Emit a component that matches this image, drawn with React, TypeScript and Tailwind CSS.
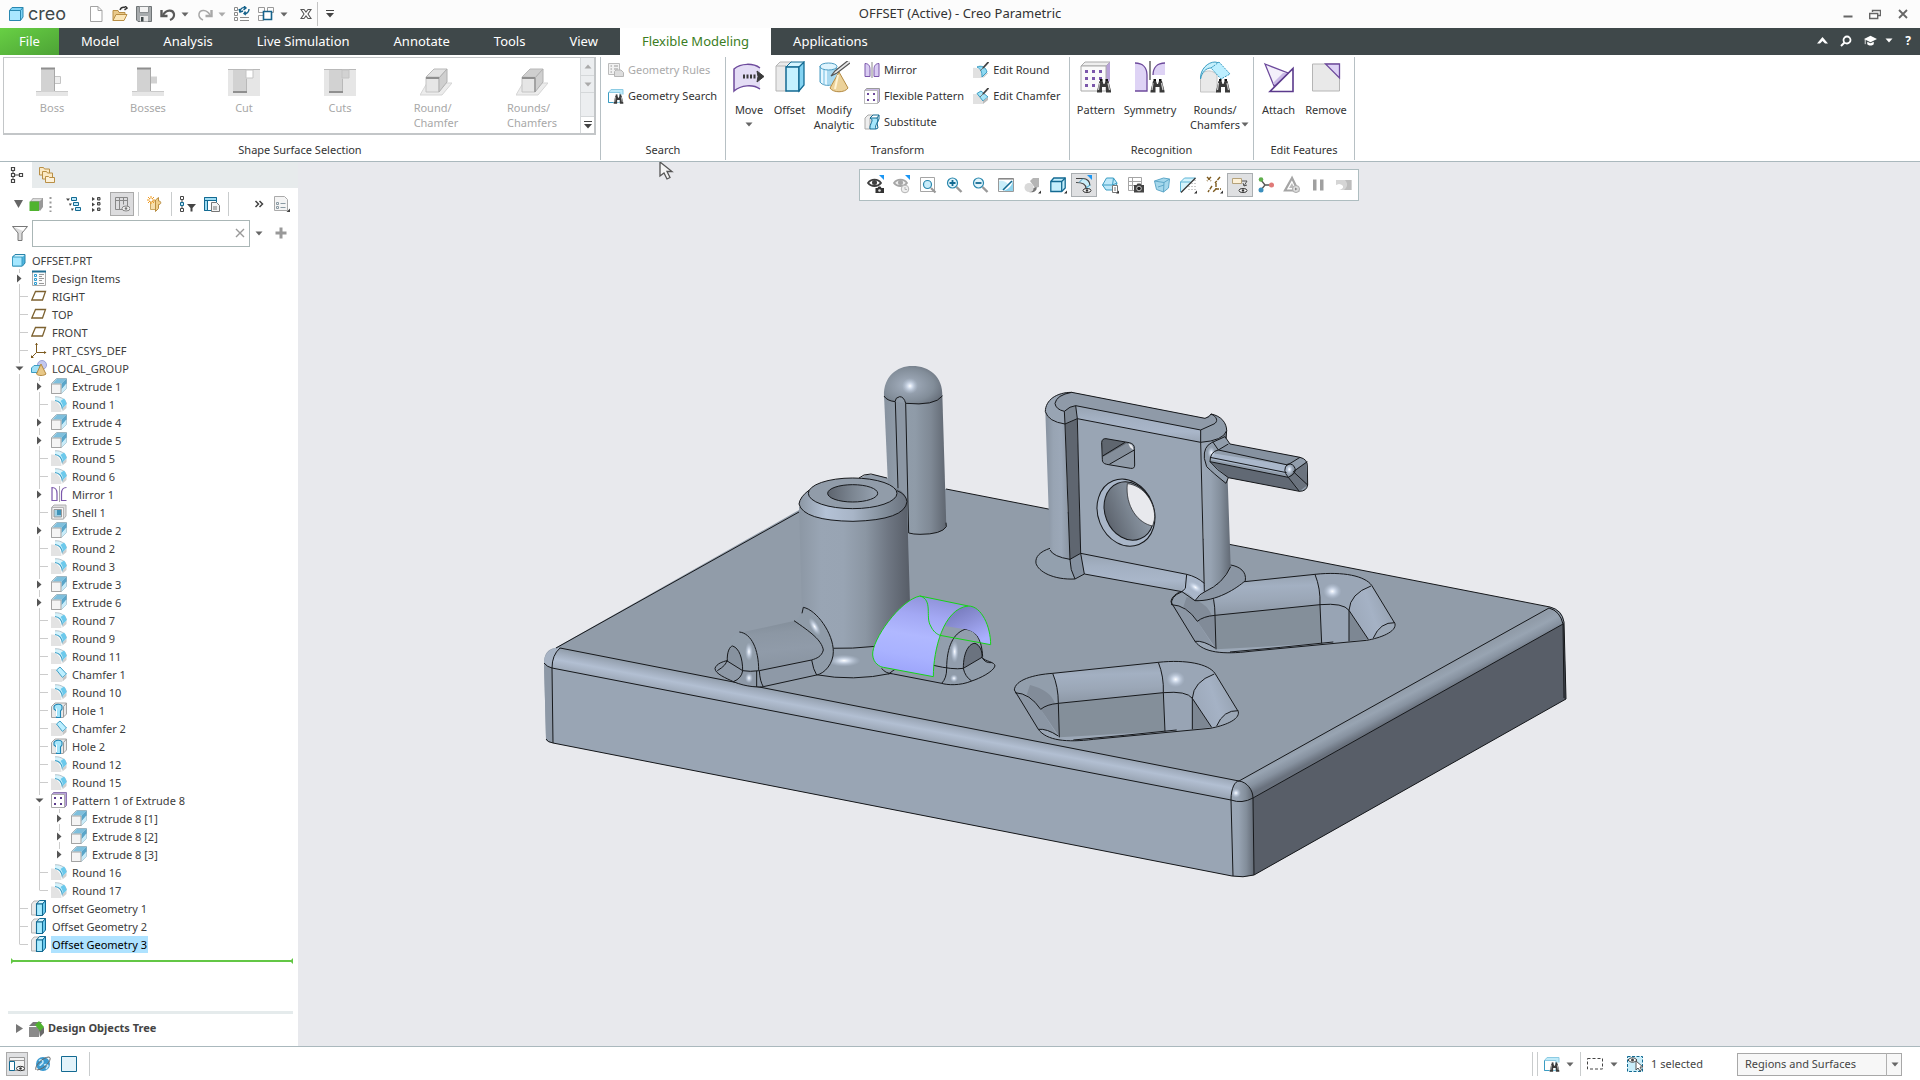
import { useState } from "react";
import type { ReactNode } from "react";

type IconProps = { size?: number; box?: string; children: ReactNode };

const Svg = ({ size = 16, box = "0 0 16 16", children }: IconProps) => (
  <svg width={size} height={size} viewBox={box} fill="none" className="shrink-0" aria-hidden="true">
    {children}
  </svg>
);

const Caret = ({ color = "#666" }: { color?: string }) => (
  <svg width="8" height="5" viewBox="0 0 8 5" className="shrink-0" aria-hidden="true">
    <path d="M0.5 0.5h7L4 4.5z" fill={color} />
  </svg>
);

const Binoculars = () => (
  <g>
    <path d="M1 14 3.500 4h3l1 3h1l1-3h3L15 14v1.500h-5V10H6v5.500H1z" fill="#3a3a3a" />
    <path d="M3.500 6 2.500 13M12 6l1.500 7" stroke="#c9c9c9" strokeWidth="1.200" />
    <path d="M4 3h2.500M9.500 3H12" stroke="#111" strokeWidth="2" />
  </g>
);

/* ---------- quick access ---------- */

const quick: Record<string, ReactNode> = {
  New: (
    <Svg>
      <path d="M2.500.5h7.500l4 4v11h-11.500z" fill="#fff" stroke="#a3a3a3" />
      <path d="M10 .5v4h4" stroke="#a3a3a3" />
    </Svg>
  ),
  Open: (
    <Svg>
      <path d="M1 14.500V4.500h5l1 2h6v3" fill="#e9c98a" stroke="#b98f45" />
      <path d="M1 14.500 4 8.500h11l-3 6z" fill="#fbe6b8" stroke="#b98f45" />
      <path d="M8 4c1-2.500 3-3 5-2.500M13 0l2 2-2.500 2" stroke="#333" strokeWidth="1.500" />
    </Svg>
  ),
  Save: (
    <Svg>
      <path d="M.5 .5h15v15H2l-1.500-1.500z" fill="#a7abad" stroke="#6f7476" />
      <path d="M3.500 .5h9v6h-9z" fill="#f3f3f3" stroke="#8b8f91" />
      <path d="M4 10h8v5.500H4z" fill="#e8e8e8" />
      <path d="M5 11h2.500v4.500H5z" fill="#3f484a" />
    </Svg>
  ),
  Undo: (
    <Svg>
      <path d="M1.500 4v6h6" stroke="#5a5a5a" strokeWidth="2.400" />
      <path d="M3 9C6 3.500 13 3 14 8c.4 3-1.500 5-4 6" stroke="#5a5a5a" strokeWidth="2.200" />
    </Svg>
  ),
  Redo: (
    <Svg>
      <path d="M14.500 4v6h-6" stroke="#a8a8a8" strokeWidth="2.400" />
      <path d="M13 9C10 3.500 3 3 2 8c-.4 3 1.500 5 4 6" stroke="#a8a8a8" strokeWidth="1.500" />
    </Svg>
  ),
  Regenerate: (
    <Svg>
      <path d="M.5 1.500h3v3h-3zM.5 6.500h3v3h-3zM.5 11.500h3v3h-3z" stroke="#8a8a8a" />
      <path d="M6 11.500h9M6 14.500h9" stroke="#8a8a8a" />
      <path d="M6 5c1-3 3-4 5-3M15 3c0 3-2 5-5 4.500M10 0l2 2-2.500 2M5 3l1 3 3-1M11.500 5.500 10 7.500l2 1.500" stroke="#16638c" strokeWidth="1.400" />
    </Svg>
  ),
  Windows: (
    <Svg>
      <path d="M.5 1.500h6v5h-6zM9.500 1.500h6v5h-6zM.5 9.500h5v5h-5z" stroke="#999" />
      <path d="M5.500 5.500h8v8h-8z" fill="#fff" stroke="#16638c" strokeWidth="1.600" />
    </Svg>
  ),
  Close: (
    <Svg size={12} box="0 0 12 12">
      <path d="M1 1.500h3l2 2.500 2-2.500h3L8 6l3 4.500H8L6 8l-2 2.500H1L4 6z" fill="#fff" stroke="#555" strokeWidth="1.100" />
    </Svg>
  ),
};

const QuickButton = ({ name }: { name: string }) => (
  <button aria-label={name} className="flex items-center">
    {quick[name]}
  </button>
);

const TitleBar = () => (
  <div className="grid h-7 grid-cols-[1fr_auto_1fr] items-center bg-[#fcfcfc] text-[13px] text-[#333]">
    <div className="flex h-full items-center pl-2">
      <Svg>
        <path d="M1.500 4.500 4 1.500h11v9.500l-2.500 3.500h-11z" fill="#7fd3f5" stroke="#2987b0" />
        <path d="M1.500 4.500h11v10M12.500 4.500l2.500-3" stroke="#2987b0" />
        <path d="M2 5h10v9H2z" fill="#a9e6ff" />
      </Svg>
      <span className="ml-1 w-10 font-['Inter'] text-[18px] leading-5 text-[#3f484a]">creo</span>
      <div className="flex items-center gap-2 pl-5">
        <QuickButton name="New" />
        <QuickButton name="Open" />
        <QuickButton name="Save" />
        <div className="flex items-center gap-[5px]">
          <QuickButton name="Undo" />
          <Caret />
        </div>
        <div className="flex items-center gap-[5px]">
          <QuickButton name="Redo" />
          <Caret color="#aaa" />
        </div>
        <QuickButton name="Regenerate" />
        <div className="flex items-center gap-[6px]">
          <QuickButton name="Windows" />
          <Caret />
        </div>
        <div className="ml-1">
          <QuickButton name="Close" />
        </div>
      </div>
      <div className="ml-[5px] h-6 w-px bg-[#c4c4c4]" />
      <button aria-label="Customize toolbar" className="ml-2">
        <svg width="8" height="8" viewBox="0 0 8 8">
          <path d="M0 .5h8" stroke="#444" />
          <path d="M0 3h8L4 7.500z" fill="#444" />
        </svg>
      </button>
    </div>
    <h1>OFFSET (Active) - Creo Parametric</h1>
    <div className="flex items-center justify-end gap-4 pr-[11px]">
      <button aria-label="Minimize" className="flex">
        <Svg size={12} box="0 0 12 12">
          <path d="M2.500 8.500h9" stroke="#666" strokeWidth="2" />
        </Svg>
      </button>
      <button aria-label="Restore" className="flex">
        <Svg size={12} box="0 0 12 12">
          <path d="M3.500 4V2.500h8v5H9" stroke="#666" strokeWidth="1.400" />
          <path d="M.7 5.500h8v5h-8z" stroke="#666" strokeWidth="1.400" />
        </Svg>
      </button>
      <button aria-label="Close window" className="flex">
        <Svg size={12} box="0 0 12 12">
          <path d="m2 2 8 8M10 2l-8 8" stroke="#666" strokeWidth="1.800" />
        </Svg>
      </button>
    </div>
  </div>
);

const tabs = ["Model", "Analysis", "Live Simulation", "Annotate", "Tools", "View", "Flexible Modeling", "Applications"];

const MenuBar = () => {
  const [active, setActive] = useState("Flexible Modeling");
  return (
    <nav className="flex h-[27px] bg-[#3f484a] text-[13px] text-white">
      <button className="w-[59px] bg-linear-to-br from-[#68d044] to-[#4da336] pt-px">File</button>
      {tabs.map((tab) => (
        <button
          key={tab}
          onClick={() => setActive(tab)}
          className={`px-[22px] pt-px ${tab === active ? "bg-white text-[#3b7d23]" : ""}`}
        >
          {tab}
        </button>
      ))}
      <div className="ml-auto flex items-center gap-3 pr-[9px] pb-[2px]">
        <button aria-label="Minimize ribbon">
          <svg width="11" height="7" viewBox="0 0 11 7">
            <path d="M0 6.500 5.500 0 11 6.500H8L5.500 4 3 6.500z" fill="#fff" />
          </svg>
        </button>
        <button aria-label="Search commands">
          <Svg size={12} box="0 0 12 12">
            <circle cx="7" cy="5" r="3.500" stroke="#fff" strokeWidth="1.800" />
            <path d="M4.500 7.500 1 11" stroke="#fff" strokeWidth="2" />
          </Svg>
        </button>
        <button aria-label="Learning" className="flex items-center gap-2">
          <Svg size={13}>
            <path d="M0 6 8 2l8 4-8 4zM4 9.500v3c2 2 6 2 8 0v-3l-4 2z" fill="#fff" />
            <path d="M1.500 6.500v6" stroke="#fff" />
          </Svg>
          <Caret color="#fff" />
        </button>
        <button aria-label="Help" className="text-[12px] font-bold">
          ?
        </button>
      </div>
    </nav>
  );
};

/* ---------- ribbon ---------- */

const bossIcon = (filled: boolean) => (
  <Svg size={32} box="0 0 32 32">
    <path d="M0 26h32v5H0z" fill="#e6e6e6" />
    <path d="M0 26.500h6M18 26.500h14" stroke="#c9c9c9" />
    <path d="M5 3h14v24H5z" fill="#d2d2d2" />
    <path d="M5 3.500h14" stroke="#8f8f8f" strokeWidth="2" />
    {filled ? (
      <path d="M18 11.500h7v7h-7z" fill="#d2d2d2" />
    ) : (
      <path d="M18.500 11.500h6v7h-6z" fill="#eee" stroke="#c4c4c4" />
    )}
    <path d="M18.500 4v22" stroke="#a8a8a8" />
  </Svg>
);

const cutIcon = (filled: boolean) => (
  <Svg size={32} box="0 0 32 32">
    <path d="M0 4h32v27H0z" fill="#e6e6e6" />
    <path d="M0 4.500h32" stroke="#b9b9b9" />
    <path d="M5 5h14v22H5z" fill="#d2d2d2" />
    <path d="M18 5h7v8h-7z" fill={filled ? "#d2d2d2" : "#fff"} stroke="#c4c4c4" />
    <path d="M18.500 14v12" stroke="#b9b9b9" />
    <path d="M5 27h14" stroke="#8f8f8f" strokeWidth="2" />
  </Svg>
);

const roundIcon = (filled: boolean) => (
  <Svg size={32} box="0 0 32 32">
    <path d="M0 30 7 18h25L22 30z" fill="#ececec" stroke="#d5d5d5" />
    <path d="M6 12 14 4h13l-8 9z" fill={filled ? "#cfcfcf" : "#e2e2e2"} stroke="#b9b9b9" />
    <path d="M6 12h13v15H6z" fill="#e6e6e6" stroke="#c4c4c4" />
    <path d="M19 13 27 4v13l-8 10z" fill="#cfcfcf" stroke="#b0b0b0" />
    <path d="M6 13h13" stroke="#8f8f8f" strokeWidth="2" />
    {filled && <path d="M19 13v14" stroke="#8f8f8f" strokeWidth="1.200" />}
  </Svg>
);

const gallery = [
  { label: "Boss", icon: bossIcon(false) },
  { label: "Bosses", icon: bossIcon(true) },
  { label: "Cut", icon: cutIcon(false) },
  { label: "Cuts", icon: cutIcon(true) },
  { label: "Round/\nChamfer", icon: roundIcon(false) },
  { label: "Rounds/\nChamfers", icon: roundIcon(true) },
];

const icons = {
  rules: (
    <Svg>
      <path d="M.5 1.500h11v11H.5z" fill="#f1f1f1" stroke="#bbb" />
      <path d="M2.500 4h1.500M6 4h4M2.500 7h1.500M6 7h4M2.500 10h1.500" stroke="#999" />
      <path d="M6.500 9.500 8 8h5l2.500 2.500v4h-9z" fill="#ddd" stroke="#b5b5b5" />
    </Svg>
  ),
  search: (
    <Svg>
      <path d="M.5 4.500 3 1.500h12v5" fill="#bfeaf8" stroke="#8ccbe3" />
      <path d="M.5 4.500H12v10H.5z" fill="#fff" stroke="#8ccbe3" />
      <path d="M.5 4.500v10H5" stroke="#3b9cc2" />
      <svg x="5" y="5" width="11" height="11" viewBox="0 0 16 16">
        <Binoculars />
      </svg>
    </Svg>
  ),
  move: (
    <Svg size={32} box="0 0 32 32">
      <path d="M1 8C8 2 20 2 27 7v22C20 23 8 24 1 30z" fill="#e4ddf5" />
      <path d="M27 7C20 2 8 2 1 8v22c7-6 19-7 26-2" stroke="#6d4a9c" strokeWidth="1.500" />
      <path d="M10 15.500h13" stroke="#3a3a3a" strokeWidth="4" strokeDasharray="2 1.500" />
      <path d="m24 10 7 5.500-7 5.500 1-5.500z" fill="#3a3a3a" stroke="#3a3a3a" />
    </Svg>
  ),
  offset: (
    <Svg size={32} box="0 0 32 32">
      <path d="M2 5 6 1h12l-5 5v24H2z" fill="#eaeaea" stroke="#b5b5b5" />
      <path d="M2 5h10" stroke="#b5b5b5" />
      <path d="M12 6 17 1h13l-5 5z" fill="#d5f5ff" stroke="#136a92" />
      <path d="M12 6h13v24H12z" fill="#c5f1ff" stroke="#136a92" strokeWidth="1.500" />
      <path d="M25 6 30 1v23l-5 6z" fill="#84d3f2" stroke="#136a92" strokeWidth="1.300" />
    </Svg>
  ),
  analytic: (
    <Svg size={32} box="0 0 32 32">
      <path d="M2 5v16c3 4 14 4 17 0V5z" fill="#a9d9f0" />
      <path d="M4 6v17M8 8v16" stroke="#e6f7ff" strokeWidth="2" />
      <ellipse cx="10.500" cy="5.500" rx="8.500" ry="3.500" fill="#dff4fd" stroke="#4c9cc2" />
      <path d="M2 5v16c2 3 7 4 11 3M19 7v4" stroke="#4c9cc2" />
      <path d="M21 11 12 27c3 5 15 5 18 0z" fill="#ecd29a" stroke="#b48a42" />
      <path d="m20 14-3 14" stroke="#fff3d3" strokeWidth="2" />
      <path d="M32-2 17 10l-4 5 6-3L32 2" fill="#e8e8e8" stroke="#555" strokeWidth="1.200" />
    </Svg>
  ),
  mirror: (
    <Svg>
      <path d="M1 1.500c4 0 5 3 5 6v7H1zM15 1.500c-4 0-5 3-5 6v7h5z" fill="#d9ccf2" stroke="#7b57ab" />
      <path d="M8 0v16" stroke="#888" />
    </Svg>
  ),
  pattern: (
    <Svg>
      <path d="M.5 3 2.500.5H15.500v13L13.500 15.500H.5z" fill="#c9b9e6" stroke="#9a9a9a" />
      <path d="M.5 2.500h13v13H.5z" fill="#fff" stroke="#bbb" />
      <path d="M3 5h2v2H3zM9 5h2v2H9zM3 11h2v2H3zM9 11h2v2H9z" fill="#6d4a9c" />
    </Svg>
  ),
  substitute: (
    <Svg>
      <path d="M1 4 4 1h5L6 4v11H1z" fill="#eee" stroke="#aaa" />
      <path d="M6 4c5 2-1 6 0 11h6c-2-5 4-6 1-11z" fill="#a6e6fb" stroke="#136a92" />
      <path d="m6 4 3-3h6l-2 3M15 1v4l-2 4 1 5-2 1" stroke="#136a92" />
    </Svg>
  ),
  editRound: (
    <Svg>
      <path d="M0 6c6-1 9 3 9 10H0z" fill="#e1e1e1" />
      <path d="M4 5c4-2 9 0 10 5l-5 5c0-5-1-8-5-10z" fill="#8fdaf3" stroke="#3b9cc2" />
      <path d="M10 15.500 14.500 11" stroke="#aaa" />
      <path d="M15.500 0 10 6" stroke="#444" strokeWidth="1.800" />
      <path d="m10 6-3 3" stroke="#777" />
    </Svg>
  ),
  editChamfer: (
    <Svg>
      <path d="M0 6h4l6 6v4H0z" fill="#e1e1e1" />
      <path d="m4 5.500 4-2.500 7 6-5 4z" fill="#a5e5f8" stroke="#3b9cc2" />
      <path d="M10 13v3l5-4V9z" fill="#bbb" />
      <path d="M15.500 0 10 6" stroke="#444" strokeWidth="1.800" />
      <path d="m10 6-3 3" stroke="#777" />
    </Svg>
  ),
  patternBig: (
    <Svg size={32} box="0 0 32 32">
      <path d="M1 5 5 1h25l-4 4z" fill="#eee" stroke="#aaa" />
      <path d="m26 5 4-4v18l-4 11z" fill="#b8a3d8" />
      <path d="M1 5h25v25H1z" fill="#fafafa" stroke="#aaa" />
      <path d="M5 9h3v3H5zM12 9h3v3h-3zM19 9h3v3h-3zM5 16h3v3H5zM12 16h3v3h-3zM19 16h3v3h-3zM5 23h3v3H5zM12 23h3v3h-3z" fill="#7b57ab" />
      <svg x="16" y="16" width="16" height="16" viewBox="0 0 16 16">
        <Binoculars />
      </svg>
    </Svg>
  ),
  symmetry: (
    <Svg size={32} box="0 0 32 32">
      <path d="M1 2c8 0 12 5 12 12v16H1zM31 2c-8 0-12 5-12 12h12z" fill="#ded3f5" />
      <path d="M1 2c8 0 12 5 12 12v16H1M31 2c-8 0-12 5-12 12" stroke="#6d4a9c" strokeWidth="1.300" />
      <path d="M16 0v19" stroke="#8a8a8a" strokeWidth="2" />
      <svg x="15" y="16" width="17" height="16" viewBox="0 0 16 16">
        <Binoculars />
      </svg>
    </Svg>
  ),
  rounds: (
    <Svg size={32} box="0 0 32 32">
      <path d="M1.500 31V18C1 11 11 6 18 14v17z" fill="#e9e9e9" stroke="#c4c4c4" />
      <path d="M1.500 18C1 8 9 1 16 1l5 1-9 5C7 7 3 11 1.500 18z" fill="#c5f0fc" stroke="#3b9cc2" />
      <path d="M12 7 20 1l11 12-9 5z" fill="#bdefff" stroke="#3b9cc2" strokeDasharray="2 1" />
      <svg x="16" y="16" width="16" height="16" viewBox="0 0 16 16">
        <Binoculars />
      </svg>
    </Svg>
  ),
  attach: (
    <Svg size={32} box="0 0 32 32">
      <path d="m2 3 23 9-14 13z" fill="#f3effa" stroke="#6d4a9c" strokeWidth="1.300" />
      <path d="m20 12 6 0-14 12-2-2z" fill="#c9b9e6" />
      <path d="M7 30.500h23v-23z" stroke="#5b3a8c" strokeWidth="1.600" />
    </Svg>
  ),
  remove: (
    <Svg size={32} box="0 0 32 32">
      <path d="M2.500 3h27v27h-27z" fill="#e9e9e9" stroke="#b5b5b5" />
      <path d="M15.500 3h14v14z" fill="#ddd2f5" stroke="#6d4a9c" strokeWidth="1.300" />
    </Svg>
  ),
};

const Group = ({ title, width, children }: { title: string; width: string; children: ReactNode }) => (
  <section className={`${width} shrink-0 flex flex-col`}>
    <div className="mt-[2px] flex h-[103px] flex-col border-r border-[#b7c0c4]">
      <div className="flex h-[83px]">{children}</div>
      <h2 className="text-center leading-[20px]">{title}</h2>
    </div>
  </section>
);

const Small = ({ icon, label, disabled }: { icon: ReactNode; label: string; disabled?: boolean }) => (
  <button disabled={disabled} className="flex h-[26px] items-center gap-1 whitespace-nowrap disabled:text-[#aaa]">
    {icon}
    {label}
  </button>
);

const Big = ({ icon, label, width, caret }: { icon: ReactNode; label: string; width: string; caret?: "below" | "side" }) => (
  <button className={`${width} flex flex-col items-center pt-1 leading-[15px]`}>
    {icon}
    <span className={`mt-[9px] whitespace-pre ${caret === "side" ? "relative" : ""}`}>
      {label}
      {caret === "side" && (
        <span className="absolute -right-[9px] bottom-[5px]">
          <Caret />
        </span>
      )}
    </span>
    {caret === "below" && (
      <span className="mt-[5px]">
        <Caret />
      </span>
    )}
  </button>
);

const Ribbon = () => (
  <div className="flex h-[107px] overflow-hidden border-b border-[#aab8bd] bg-white text-[11px] text-[#333]">
    <Group title="Shape Surface Selection" width="w-[601px]">
      <div className="ml-[3px] flex h-[78px] w-[593px] border-2 border-t-1 border-l-1 border-[#c3c6c8]">
        {gallery.map((g) => (
          <button key={g.label} disabled className="flex w-24 flex-col items-center pt-[7px] leading-[15px] text-[#a8a8a8]">
            {g.icon}
            <span className="mt-[3px] text-left whitespace-pre">{g.label}</span>
          </button>
        ))}
        <div className="flex flex-1 flex-col border-l border-[#d5d8da]">
          <button aria-label="Scroll up" className="flex h-[17px] items-center justify-center bg-[#eceef0]">
            <svg width="8" height="5" viewBox="0 0 8 5">
              <path d="M.5 4.500h7L4 .5z" fill="#aaa" />
            </svg>
          </button>
          <button aria-label="Scroll down" className="flex h-[18px] items-center justify-center border-y border-[#d5d8da] bg-[#eceef0]">
            <Caret color="#aaa" />
          </button>
          <div className="flex-1 bg-[#eceef0]" />
          <button aria-label="More shapes" className="flex h-[17px] items-center justify-center border-t border-[#d5d8da]">
            <svg width="8" height="8" viewBox="0 0 8 8">
              <path d="M0 .5h8" stroke="#444" />
              <path d="M0 3h8L4 7.500z" fill="#444" />
            </svg>
          </button>
        </div>
      </div>
    </Group>
    <Group title="Search" width="w-[125px]">
      <div className="flex flex-col pl-[7px]">
        <Small icon={icons.rules} label="Geometry Rules" disabled />
        <Small icon={icons.search} label="Geometry Search" />
      </div>
    </Group>
    <Group title="Transform" width="w-[344px]">
      <Big icon={icons.move} label="Move" width="w-[46px]" caret="below" />
      <Big icon={icons.offset} label="Offset" width="w-[35px]" />
      <Big icon={icons.analytic} label={"Modify\nAnalytic"} width="w-[54px]" />
      <div className="flex flex-col pl-[3px]">
        <Small icon={icons.mirror} label="Mirror" />
        <Small icon={icons.pattern} label="Flexible Pattern" />
        <Small icon={icons.substitute} label="Substitute" />
      </div>
      <div className="flex flex-col pl-[9px]">
        <Small icon={icons.editRound} label="Edit Round" />
        <Small icon={icons.editChamfer} label="Edit Chamfer" />
      </div>
    </Group>
    <Group title="Recognition" width="w-[184px]">
      <Big icon={icons.patternBig} label="Pattern" width="w-[52px]" />
      <Big icon={icons.symmetry} label="Symmetry" width="w-[56px]" />
      <Big icon={icons.rounds} label={"Rounds/\nChamfers"} width="w-[74px]" caret="side" />
    </Group>
    <Group title="Edit Features" width="w-[101px]">
      <Big icon={icons.attach} label="Attach" width="w-[49px]" />
      <Big icon={icons.remove} label="Remove" width="w-[46px]" />
    </Group>
  </div>
);

/* ---------- model tree ---------- */

const treeIcons: Record<string, ReactNode> = {
  part: (
    <Svg>
      <path d="M1.500 5 4 2.500h10v8.500L11.500 14h-10z" fill="#4cb5e0" stroke="#2b83a8" />
      <path d="M1.500 5h9.500v9h-9.500z" fill="#a5e7ff" stroke="#3b9cc2" />
      <path d="m3 4.500 1.500-1.500h9L12 4.500z" fill="#d5f5ff" />
    </Svg>
  ),
  items: (
    <Svg>
      <path d="M1.500 1.500h13v14h-13z" fill="#fbfbfb" stroke="#aaa" />
      <path d="M1 1.500h14" stroke="#1f6f94" strokeWidth="2" />
      <path d="M3.500 4.500h2v2h-2zM3.500 8.500h2v2h-2zM3.500 12.500h2v2h-2z" stroke="#2a9bd0" />
      <path d="M8 4.500h5M8 6.500h3M8 8.500h5M8 10.500h3M8 13.500h5" stroke="#999" />
    </Svg>
  ),
  plane: (
    <Svg>
      <path d="M4.500 3.500h10l-3 8.500H.8z" stroke="#7d6230" strokeWidth="1.300" />
    </Svg>
  ),
  csys: (
    <Svg>
      <path d="M5.500 1v9.500H15M5.500 10.500 1 15" stroke="#7d5a1e" />
      <path d="M4 3 5.500 1 7 3zM13 9l2.500 1.500L13 12zM0 13v3h3z" fill="#7d5a1e" />
    </Svg>
  ),
  group: (
    <Svg>
      <circle cx="11" cy="5" r="4.500" fill="#c3c8ee" stroke="#9aa2d8" />
      <path d="M.5 8 3 5.500h6v7H.5z" fill="#9fe0f7" stroke="#3b9cc2" />
      <path d="m10 4-4.500 10c2 2 7 2 9.500 0z" fill="#e8c888" stroke="#b48a42" />
    </Svg>
  ),
  extrude: (
    <Svg>
      <path d="M.5 5.500 5.500.5h10v10l-5 5H.5z" fill="#dff4fc" stroke="#a5b3ba" />
      <path d="M6 .8h9.500L10.500 5.500H1.500z" fill="#7fbfdc" />
      <path d="M10.500 5.500 15.500.8v4.700l-5 6z" fill="#5aa6ca" />
      <path d="m10.500 11.500 5-6v5l-5 5z" fill="#c9ecf9" />
      <path d="M.5 6h9.500v9.500H.5z" fill="#f4f4f4" stroke="#a3a3a3" />
    </Svg>
  ),
  round: (
    <Svg>
      <path d="M0 4.500c6-1 10 4.500 10.500 11.500H0z" fill="#e3e3e3" />
      <path d="M4 .8c6-.5 11 3 11.700 8.200L11.500 13c-.5-4-3-7-7.500-8z" fill="#d5f3fc" />
      <path d="M4 .8c6-.5 11 3 11.500 7.200" stroke="#b5c3ca" />
      <path d="M4 4.500c4 .5 7 4 7.500 9" stroke="#3f9fc6" strokeWidth="1.200" />
      <path d="m9.500 5 3.500-2.500c1.500 1.500 2.500 3.500 2.500 6L12 12c0-3-1-5-2.500-7z" fill="#6bc9ec" />
      <path d="M11.500 12.500V15.500L15.500 12V8.500z" fill="#cfcfcf" />
    </Svg>
  ),
  mirror: (
    <Svg>
      <path d="M1 1.500c4 0 5 3 5 6v7H1zM15.500 1.500c-4 0-5 3-5 6v7h5" stroke="#7b57ab" strokeWidth="1.200" />
      <path d="M8.500 0v16" stroke="#aaa" />
    </Svg>
  ),
  shell: (
    <Svg>
      <path d="M.5 3.500 3 1h12v11l-2.500 3H.5z" fill="#dedede" stroke="#b0b0b0" />
      <path d="M1 3.500h11.500V15H1z" fill="#f6f6f6" stroke="#b5b5b5" />
      <path d="M3 5.500h7.500v7.500H3z" fill="#9fd0e5" stroke="#999" />
      <path d="M6 6h4v5H6z" fill="#3f93b8" />
    </Svg>
  ),
  chamfer: (
    <Svg>
      <path d="M0 3h5l6 7v6H0z" fill="#e3e3e3" />
      <path d="m5.500 4 3.500-3 6.500 7-4 3.500z" fill="#bdefff" stroke="#3f9fc6" />
      <path d="m11.500 12 4-3.500V12l-4 3.500z" fill="#c4c4c4" />
    </Svg>
  ),
  hole: (
    <Svg>
      <path d="M.5 4.500 4 1h11.500v11L12 15.500H.5z" fill="#e9e9e9" stroke="#a5a5a5" />
      <path d="M3 4.500C4 1.500 10 1.500 11 4v3L9.500 9v6.500H5.500V9L3 7z" fill="#a6e6fb" stroke="#1f86b5" strokeWidth="1.100" />
      <path d="M5.500 6.500v8" stroke="#fff" />
      <path d="M12.500 4.500v11M12.500 4.500 15.500 1" stroke="#9a9a9a" />
    </Svg>
  ),
  pattern: (
    <Svg>
      <path d="M.5 3 2.500.5H15.500v13L13.500 15.500z" fill="#b8a3d8" stroke="#8d76b0" />
      <path d="M.5 2.500h13v13H.5z" fill="#fff" stroke="#aaa" />
      <path d="M3 5h2v2H3zM9 5h2v2H9zM3 11h2v2H3zM9 11h2v2H9z" fill="#5b3a8c" />
    </Svg>
  ),
  offset: (
    <Svg>
      <path d="M.5 4 3 1h5L5.500 4v11H.5z" fill="#eaeaea" stroke="#b5b5b5" />
      <path d="m5.500 4 3-3.500h6l-3 3.500z" fill="#d5f5ff" stroke="#136a92" />
      <path d="M5.500 4h6v11.500h-6z" fill="#a9ebff" stroke="#136a92" strokeWidth="1.100" />
      <path d="m11.500 4 3-3.500V12l-3 3.500z" fill="#6bcaee" stroke="#136a92" />
    </Svg>
  ),
};

type Row = { label: string; icon: string; depth: number; open?: boolean; closed?: boolean; last?: boolean; selected?: boolean };

const feature = (label: string, closed = false, depth = 2): Row => ({
  label,
  icon: label.split(" ")[0].toLowerCase(),
  depth,
  closed,
});

const rows: Row[] = [
  { label: "OFFSET.PRT", icon: "part", depth: 0 },
  { label: "Design Items", icon: "items", depth: 1, closed: true },
  { label: "RIGHT", icon: "plane", depth: 1 },
  { label: "TOP", icon: "plane", depth: 1 },
  { label: "FRONT", icon: "plane", depth: 1 },
  { label: "PRT_CSYS_DEF", icon: "csys", depth: 1 },
  { label: "LOCAL_GROUP", icon: "group", depth: 1, open: true },
  feature("Extrude 1", true),
  feature("Round 1"),
  feature("Extrude 4", true),
  feature("Extrude 5", true),
  feature("Round 5"),
  feature("Round 6"),
  feature("Mirror 1", true),
  feature("Shell 1"),
  feature("Extrude 2", true),
  feature("Round 2"),
  feature("Round 3"),
  feature("Extrude 3", true),
  feature("Extrude 6", true),
  feature("Round 7"),
  feature("Round 9"),
  feature("Round 11"),
  feature("Chamfer 1"),
  feature("Round 10"),
  feature("Hole 1"),
  feature("Chamfer 2"),
  feature("Hole 2"),
  feature("Round 12"),
  feature("Round 15"),
  { label: "Pattern 1 of Extrude 8", icon: "pattern", depth: 2, open: true },
  feature("Extrude 8 [1]", true, 3),
  feature("Extrude 8 [2]", true, 3),
  { ...feature("Extrude 8 [3]", true, 3), last: true },
  feature("Round 16"),
  { ...feature("Round 17"), last: true },
  { label: "Offset Geometry 1", icon: "offset", depth: 1 },
  { label: "Offset Geometry 2", icon: "offset", depth: 1 },
  { label: "Offset Geometry 3", icon: "offset", depth: 1, last: true, selected: true },
];

const Guide = ({ row, own }: { row: Row; own: boolean }) => {
  const arrow = own && (row.open || row.closed);
  const end = own && row.last;
  return (
    <svg width="20" height="18" viewBox="0 0 20 18" className="shrink-0" aria-hidden="true">
      {arrow ? (
        <path d={end ? "M10.500 0v4" : "M10.500 0v4M10.500 15v3"} stroke="#ccc" />
      ) : (
        <path d={`M10.500 0v${end ? 9 : 18}${own ? "M10.500 9.500H19" : ""}`} stroke="#ccc" />
      )}
      {arrow && row.closed && <path d="M8 5.500 12.500 9.500 8 13.500z" fill="#555" />}
      {arrow && row.open && <path d="M6.500 7.500h8l-4 4z" fill="#555" />}
    </svg>
  );
};

const Tree = () => (
  <ul className="mt-1 pl-[9px] text-[11px] text-[#3c3c3c]">
    {rows.map((row) => (
      <li key={row.label} className="flex h-[18px] items-center">
        {Array.from({ length: row.depth }, (_, i) => (
          <Guide key={i} row={row} own={i === row.depth - 1} />
        ))}
        <button className="flex items-center gap-1 pl-[2px]">
          {treeIcons[row.icon]}
          <span className={`px-px leading-[17px] whitespace-nowrap ${row.selected ? "bg-[#aee2ff] text-black" : ""}`}>
            {row.label}
          </span>
        </button>
      </li>
    ))}
  </ul>
);

const Sep = () => <div className="h-6 w-px shrink-0 bg-[#c9cccd]" />;

const PanelTools = () => (
  <div className="flex h-[31px] items-center pl-[14px]">
    <button aria-label="Model" className="flex items-center gap-[6px]">
      <svg width="9" height="8" viewBox="0 0 9 8">
        <path d="M0 0h9L4.500 8z" fill="#666" />
      </svg>
      <Svg>
        <path d="M1 5.500 4 2h10v9l-3 4z" fill="#999" />
        <path d="M2 5 4.500 2.500h9L11 5z" fill="#d9d9d9" />
        <path d="M.5 5.500h9.500v9.500H.5z" fill="#4fb32f" />
      </Svg>
    </button>
    <svg width="3" height="16" viewBox="0 0 3 16" className="ml-1">
      <path d="M1.500 1v15" stroke="#999" strokeWidth="2" strokeDasharray="2 2.500" />
    </svg>
    <button aria-label="Expand all" className="ml-[14px]">
      <Svg>
        <path d="M0 2.500h4L2 5zM3 7.500h3l-2 2.500zM5 12.500h3L6 15z" fill="#444" />
        <path d="M5.500 1.500h5v3h-5zM7.500 6.500h5v3h-5zM9.500 11.500h5v3h-5z" fill="#bfe9fa" stroke="#136a92" />
      </Svg>
    </button>
    <button aria-label="Collapse all" className="ml-2">
      <Svg>
        <path d="M2 1v4l3-2zM2 6.500v4L5 8.500zM2 12v4l3-2z" fill="#444" />
        <path d="M7.500 1.500h2.500v2.500h-2.500zM7.500 6.500h2.500v2.500h-2.500zM7.500 12h2.500v2.500h-2.500z" fill="#aaa" stroke="#444" />
      </Svg>
    </button>
    <button aria-label="Tree columns" className="ml-1 flex h-6 w-6 items-center justify-center border border-[#aaa] bg-[#dcdcde]">
      <Svg>
        <path d="M1.500 1.500h12v12h-12zM1.500 4.500h12M5.500 1.500v12M9.500 1.500v7" stroke="#888" />
        <ellipse cx="12" cy="12.500" rx="4" ry="2.500" fill="#eee" stroke="#888" />
        <circle cx="12" cy="12.500" r="1.300" fill="#777" />
      </Svg>
    </button>
    <div className="ml-1">
      <Sep />
    </div>
    <button aria-label="New layout" className="mx-2">
      <Svg>
        <path d="M3.500 5h6v8.500h-6z" fill="#f6dfae" stroke="#c9a765" />
        <path d="M8.500 4 11.500 1.500v3.500c3-.5 3 4 0 3.500v4L8.500 15.500z" fill="#f0cf8c" stroke="#b98f45" />
        <path d="M4 0v8M0 4h8M1 1l6 6M7 1 1 7" stroke="#f09a1f" />
        <circle cx="4" cy="4" r="1.500" fill="#fff" />
      </Svg>
    </button>
    <Sep />
    <div className="ml-2 flex items-center gap-2">
      <button aria-label="Tree filters">
        <Svg>
          <path d="M.5 .5h3v3h-3zM.5 12.500h3v3h-3zM2 4v8" stroke="#444" />
          <path d="M.5 6.500h3v3h-3z" fill="#bfe9fa" stroke="#136a92" />
          <path d="M7 8h9l-3.500 4v3.500h-2V12z" fill="#444" />
        </Svg>
      </button>
      <button aria-label="Column settings">
        <Svg>
          <path d="M.5 1.500h12v13H.5z" fill="#fff" stroke="#136a92" />
          <path d="M.5 1.500h12v3H.5zM.5 4.500h3v10h-3z" fill="#9fdcf3" stroke="#136a92" />
          <path d="M7.500 6.500h5l3 3v6h-8z" fill="#f4f4f4" stroke="#777" />
          <path d="M9 11h4M9 13h4" stroke="#777" />
        </Svg>
      </button>
    </div>
    <div className="ml-2">
      <Sep />
    </div>
    <div className="ml-auto flex items-center gap-[10px] pr-2">
      <button aria-label="More tools">
        <Svg size={10} box="0 0 10 10">
          <path d="m1.500 2 3 3-3 3M5.500 2l3 3-3 3" stroke="#444" strokeWidth="1.500" />
        </Svg>
      </button>
      <button aria-label="Settings">
        <Svg>
          <path d="M.5.5h10l3 3v11H.5z" fill="#f4f4f4" stroke="#aaa" />
          <path d="M2.500 6.500h2v2h-2zM2.500 10.500h2v2h-2zM6.500 7.500h5M6.500 11.500h5" stroke="#8a9aa3" />
          <path d="M16 12.500V16h-3.500z" fill="#444" />
        </Svg>
      </button>
    </div>
  </div>
);

const Sidebar = () => (
  <aside className="flex w-[298px] shrink-0 flex-col bg-white">
    <div className="flex h-[26px] bg-[#e7ebec]">
      <button aria-label="Model Tree" className="flex w-8 items-center bg-white pl-[10px]">
        <Svg>
          <path d="M3 4v2M3 10v2M5 8h5" stroke="#444" />
          <path d="M1.500.5h3v3h-3zM1.500 6.500h3v3h-3zM1.500 12.500h3v3h-3zM9.500 6.500h3v3h-3z" stroke="#444" strokeWidth="1.200" />
        </Svg>
      </button>
      <button aria-label="Folder Browser" className="flex w-8 items-center pl-[7px]">
        <Svg>
          <path d="M.5 8V.5h4l1 1.500h5v6z" fill="#fbe9c4" stroke="#b98f45" />
          <path d="M3.500 12V4.500h4l1 1.500h5v6z" fill="#fbe9c4" stroke="#b98f45" />
          <path d="M6.500 15.500v-6h3l1 1h5v5z" fill="#fdf1d8" stroke="#b98f45" />
        </Svg>
      </button>
    </div>
    <PanelTools />
    <div className="flex h-7 items-center pl-3">
      <Svg>
        <path d="M.5 1.500h15L10 8v7.500H6V8z" fill="#ddd" stroke="#777" />
        <path d="M2 2h12l-3 4z" fill="#fff" />
      </Svg>
      <label className="ml-1 flex h-[27px] w-[218px] items-center border border-[#aab6b6] bg-white">
        <input aria-label="Filter tree" className="w-0 flex-1 px-1 text-[11px] outline-0" />
        <button aria-label="Clear filter" className="mr-[3px] flex">
          <Svg size={12} box="0 0 12 12">
            <path d="m2 2 8 8M10 2l-8 8" stroke="#999" strokeWidth="1.400" />
          </Svg>
        </button>
      </label>
      <button aria-label="Filter options" className="ml-[5px]">
        <Caret />
      </button>
      <button aria-label="Add filter" className="ml-3">
        <Svg size={12} box="0 0 12 12">
          <path d="M6 .5v11M.5 6h11" stroke="#999" strokeWidth="3" />
        </Svg>
      </button>
    </div>
    <Tree />
    <svg width="282" height="6" viewBox="0 0 282 6" className="mt-[5px] ml-[11px]" aria-hidden="true">
      <path d="M0 3h282" stroke="#63c745" strokeWidth="2" />
      <path d="M0 0v6l3-3zM282 0v6l-3-3z" fill="#63c745" />
    </svg>
    <div className="mt-auto mr-[5px] ml-2 border-t-3 border-[#e5ebec] pb-[3px]">
      <button className="flex h-[29px] items-center pl-2 text-[11px] font-bold text-[#444]">
        <svg width="7" height="9" viewBox="0 0 7 9">
          <path d="M0 0v9l7-4.500z" fill="#777" />
        </svg>
        <span className="mr-[3px] ml-[6px]">
          <Svg>
            <path d="M0 5 4 1h9l-3 4z" fill="#777" />
            <path d="M0 6h10v10H0z" fill="#8a8a8a" />
            <path d="m10 9 5-3v6l-4 4z" fill="#6a6a6a" />
            <path d="m6 4 4-4 5 6-4 4z" fill="#4fb32f" />
          </Svg>
        </span>
        Design Objects Tree
      </button>
    </div>
  </aside>
);

/* ---------- graphics toolbar ---------- */

const flag = <path d="M11-2h5v5z" fill="#1b96f3" />;
const more = <path d="M17 13.500v3h-3z" fill="#333" />;
const lens = (
  <>
    <circle cx="6.500" cy="6" r="5" fill="#e3f5fc" stroke="#2a87ad" strokeWidth="1.200" />
    <path d="m10.500 10 5 5" stroke="#999" strokeWidth="2.400" />
  </>
);

const viewTools: { name: string; icon: ReactNode; on?: boolean }[] = [
  {
    name: "Visibility",
    icon: (
      <>
        <path d="M0 6c3-4.500 10-4.500 13 0-3 4-10 4-13 0z" fill="#fff" stroke="#3f3f3f" strokeWidth="1.800" />
        <circle cx="6.500" cy="5.500" r="2.500" fill="#3f3f3f" />
        <path d="M7.500 11h2l1-1.500h2l1 1.500H16v5H7.500z" fill="#333" />
        <circle cx="11.500" cy="13.500" r="1.300" fill="#ddd" />
        {flag}
      </>
    ),
  },
  {
    name: "Saved visibility",
    icon: (
      <>
        <path d="M0 6c3-4.500 10-4.500 13 0-3 4-10 4-13 0z" fill="#eee" stroke="#a5a5a5" strokeWidth="1.800" />
        <circle cx="6.500" cy="5.500" r="2.500" fill="#a5a5a5" />
        <circle cx="11" cy="12" r="3.800" fill="#eee" stroke="#b5b5b5" />
        <path d="M11 10v2.500h2" stroke="#b5b5b5" />
        {flag}
      </>
    ),
  },
  {
    name: "Refit",
    icon: (
      <>
        <path d="M.5.5h14v14H.5z" stroke="#a5a5a5" />
        <circle cx="7.500" cy="7.500" r="4" fill="#c8ecfa" stroke="#2a87ad" strokeWidth="1.200" />
        <path d="m11 11 4.500 4.500" stroke="#999" strokeWidth="2.200" />
      </>
    ),
  },
  { name: "Zoom in", icon: <>{lens}<path d="M3.500 6h6M6.500 3v6" stroke="#136a92" strokeWidth="1.800" /></> },
  { name: "Zoom out", icon: <>{lens}<path d="M3.500 6h6" stroke="#136a92" strokeWidth="1.800" /></> },
  {
    name: "Repaint",
    icon: (
      <>
        <path d="M.5 1.500h15v13H.5z" fill="#fff" stroke="#999" />
        <path d="M15 3v11H5c6-2 9-5 10-11z" fill="#8fd4ee" />
        <path d="M1 4c4-1 7 1 9 3l-4 6H1z" fill="#c9eefa" />
        <path d="M.5 2h15" stroke="#777" />
        <path d="m5 13 9-9" stroke="#136a92" strokeWidth="1.600" />
      </>
    ),
  },
  {
    name: "Rendering",
    icon: (
      <>
        <path d="M6 4 9 1h6v9l-4 1z" fill="#b5b5b5" />
        <circle cx="5" cy="10.500" r="4.500" fill="#d9d9d9" />
        <path d="M5 15c3 0 4.500-1.500 4.500-4l3-1c1 4-3 6-7.500 5z" fill="#777" />
        {more}
      </>
    ),
  },
  {
    name: "Display style",
    icon: (
      <>
        <path d="m.8 4.500 3-3.500h11.400v10l-3.500 3.500H.8z" fill="#c5effc" stroke="#136a92" strokeWidth="1.300" />
        <path d="M.8 4.500h10.900v10M11.700 4.500l3.500-3.500" stroke="#136a92" strokeWidth="1.300" />
        {more}
      </>
    ),
  },
  {
    name: "Edge display",
    on: true,
    icon: (
      <>
        <path d="M6 2c5 0 9 4 9 8l-4 3c0-5-2-7-7-8z" fill="#c9eefa" />
        <path d="M0 1.500h7c4 0 7 3 7 7M0 5.500c7 0 10 2 10 6" stroke="#444" strokeWidth="1.200" />
        <path d="M7 1.500 3 5.500M14 8l-4 3" stroke="#3b9cc2" />
        <ellipse cx="11" cy="13.500" rx="4" ry="2" fill="#fff" stroke="#333" />
        <circle cx="11" cy="13.500" r="1.200" fill="#333" />
        {flag}
      </>
    ),
  },
  {
    name: "Saved orientations",
    icon: (
      <>
        <path d="m.5 8 4-7h7l3.500 5-2 7H4z" fill="#bfe9fa" stroke="#3b9cc2" />
        <path d="M.5 8h10l4.500-2M10.500 8l1-7" stroke="#3b9cc2" />
        <path d="M10.500 8.500h5v7h-5z" fill="#fff" stroke="#777" />
        <path d="M12 11h2M12 13h2" stroke="#777" />
        {more}
      </>
    ),
  },
  {
    name: "View manager",
    icon: (
      <>
        <path d="M.5.5h13v13H.5zM.5 4.500h13M.5 8.500h13M4.500.5v13" fill="#fff" stroke="#a5a5a5" />
        <path d="M6 8h2.500l1-1.500h3l1 1.500H16v7.500H6z" fill="#444" />
        <circle cx="11" cy="11.500" r="2.300" fill="#222" stroke="#ccc" />
      </>
    ),
  },
  {
    name: "Perspective",
    icon: (
      <>
        <path d="m.5 4 9-3 6 1-1 9-5 4-7-2.500z" fill="#a5d8ec" stroke="#5fa8c9" />
        <path d="m.5 4 9.500 1.500 5.500-3.500M10 5.500l-.5 9.500M4 10l6-2" stroke="#5fa8c9" />
      </>
    ),
  },
  {
    name: "Section",
    icon: (
      <>
        <path d="m.5 5 4-4h11l-15 14.500z" fill="#d5f3fc" />
        <path d="m.5 5 4-4h11M.5 5h10M.5 5v10" stroke="#5fb5d6" />
        <path d="M15.500 1 1 15.500" stroke="#333" strokeWidth="1.200" />
        <path d="M15 3v10M12 6v9M9 9v6" stroke="#999" strokeDasharray="1 2" />
        {more}
      </>
    ),
  },
  {
    name: "Datum display",
    icon: (
      <>
        <path d="m1 0 4 4M5 0 1 4M14 0 9 6M6 9l-4 6M10 6v6h5M10 12l-3 3" stroke="#7d5a1e" strokeWidth="1.400" strokeDasharray="4 1" />
        {more}
      </>
    ),
  },
  {
    name: "Annotation display",
    on: true,
    icon: (
      <>
        <path d="M.5 1.500h9v5h-9z" fill="#fdf1d8" stroke="#b5a27a" />
        <path d="M10 4h5l-3 5M11 6l1 3 3-1" stroke="#555" />
        <ellipse cx="11" cy="13.500" rx="4" ry="2" fill="#fff" stroke="#333" />
        <circle cx="11" cy="13.500" r="1.200" fill="#333" />
      </>
    ),
  },
  {
    name: "Spin center",
    icon: (
      <>
        <path d="M3 3l4 5h6M7 8l-4 5" stroke="#555" strokeWidth="1.300" />
        <circle cx="3" cy="2.500" r="2.300" fill="#5fae4c" />
        <circle cx="13.500" cy="8" r="2.500" fill="#e07a78" />
        <circle cx="3" cy="13" r="2.500" fill="#3b8fbe" />
      </>
    ),
  },
  {
    name: "Simulate",
    icon: (
      <>
        <path d="M8 1 1 13.500h13z" stroke="#a5a5a5" strokeWidth="2.200" />
        <path d="m8 6-3 5h5z" fill="#bbb" />
        <circle cx="12" cy="12" r="3.500" fill="#ddd" stroke="#aaa" />
        <path d="m11 10.500 2.500 1.500-2.500 1.500z" fill="#888" />
      </>
    ),
  },
  { name: "Pause", icon: <path d="M3 2.500h3.500v11H3zM10 2.500h3.500v11H10z" fill="#a0a0a0" /> },
  {
    name: "Resume",
    icon: (
      <>
        <path d="M0 3h15.500v10H3c5-1 6-5 0-6L0 8z" fill="#d5d5d5" />
        <path d="M9 3h6.500v10H8c4-3 4-7 1-10z" fill="#bdbdbd" />
      </>
    ),
  },
];

const ViewToolbar = () => (
  <div className="relative mt-[7px] flex h-8 items-center border border-[#aebdc0] bg-white pr-px pl-[3px]">
    {viewTools.map((t) => (
      <button
        key={t.name}
        aria-label={t.name}
        className={`flex h-6 w-[26px] items-center justify-center ${t.on ? "border border-[#aaaeb1] bg-[#dfe0e2]" : ""}`}
      >
        <svg width="16" height="16" viewBox="0 0 16 16" fill="none" className="shrink-0 overflow-visible">
          {t.icon}
        </svg>
      </button>
    ))}
  </div>
);

/* ---------- 3D model ---------- */

const Stops = ({ colors }: { colors: string[] }) => (
  <>
    {colors.map((c, i) => (
      <stop key={i} offset={i / (colors.length - 1)} stopColor={c} />
    ))}
  </>
);

const Defs = () => (
  <defs>
    <linearGradient id="frontFillet" gradientUnits="userSpaceOnUse" x1="900" y1="714" x2="896" y2="735">
      <Stops colors={["#939fad", "#a3afc0", "#b2bfd2", "#a6b2c3", "#99a5b4"]} />
    </linearGradient>
    <linearGradient id="sideFillet" gradientUnits="userSpaceOnUse" x1="1400" y1="691" x2="1410" y2="710">
      <Stops colors={["#919ca9", "#98a4b2", "#8792a0", "#69717d"]} />
    </linearGradient>
    <linearGradient id="corner">
      <Stops colors={["#9aa6b5", "#97a3b2", "#838e9b", "#626a75"]} />
    </linearGradient>
    <linearGradient id="column">
      <Stops colors={["#8792a0", "#98a4b3", "#9ca8b8", "#8a95a3"]} />
    </linearGradient>
    <linearGradient id="pin">
      <Stops colors={["#87929f", "#919daa", "#8f9ba8", "#7f8995", "#5f6670"]} />
    </linearGradient>
    <linearGradient id="cyl">
      <Stops colors={["#8c97a4", "#99a5b4", "#98a4b3", "#8b96a3", "#6f7783", "#575d67"]} />
    </linearGradient>
    <linearGradient id="chamferRing">
      <Stops colors={["#8b96a3", "#b4c2d6", "#a8b5c7", "#8793a0", "#6a727e"]} />
    </linearGradient>
    <linearGradient id="bore">
      <Stops colors={["#5d646e", "#7c8692", "#97a3b1"]} />
    </linearGradient>
    <linearGradient id="arm" x1="0" y1="0" x2=".2" y2="1">
      <Stops colors={["#7f8a96", "#8c97a4", "#909ba9", "#8a95a2"]} />
    </linearGradient>
    <linearGradient id="rim" x1="0" y1="0" x2=".08" y2="1">
      <Stops colors={["#939fad", "#a3b0c2", "#9ba7b7", "#8d98a6"]} />
    </linearGradient>
    <linearGradient id="ramp" x1="0" y1=".7" x2="1" y2=".3">
      <Stops colors={["#9ba7b8", "#a5b2c5", "#929eac"]} />
    </linearGradient>
    <linearGradient id="topRound" x1="0" y1="0" x2="-.05" y2="1">
      <Stops colors={["#97a3b2", "#a3b0c2", "#a9b6c9", "#97a3b2"]} />
    </linearGradient>
    <linearGradient id="bluePatch" x1=".6" y1="0" x2=".4" y2="1">
      <Stops colors={["#8f92d8", "#a3a8f4", "#b0b8ff", "#a9b2ff", "#9ba3fa"]} />
    </linearGradient>
    <linearGradient id="blueInner" x1="0" y1="0" x2=".6" y2="1">
      <Stops colors={["#6f73b3", "#8c90d6", "#aab0ff"]} />
    </linearGradient>
    <radialGradient id="glow">
      <stop offset="0" stopColor="#fff" />
      <stop offset=".3" stopColor="#dfe9f9" stopOpacity=".8" />
      <stop offset="1" stopColor="#b4c2d6" stopOpacity="0" />
    </radialGradient>
    <radialGradient id="dome" cx=".42" cy=".5" r=".65">
      <Stops colors={["#a9b5c4", "#949fad", "#828d99", "#646c77"]} />
    </radialGradient>
  </defs>
);

const Plate = () => (
  <g strokeLinejoin="round">
    <path d="M544 663C544 654 548 649 555 648L799 510 866 475H876L887 478 946 489 1550 607C1558 609 1563 613 1564 622L1566 699 1254 875Q1243 878 1232 876L553 743Q546 742 546 739Z" fill="#919ca9" />
    <path d="M552 668 1231 800 1233 876 553 743Z" fill="#99a5b4" />
    <path d="M544 663 552 668 553 743 546 739Z" fill="#8d98a6" />
    <path d="M560 648 1239 781Q1231 786 1231 800L552 668Q552 655 560 648Z" fill="url(#frontFillet)" />
    <path d="M544 663Q544 651 555 648L560 648Q552 655 552 668Z" fill="#a7b3c4" />
    <path d="M1239 781 1549 608Q1560 611 1563 624L1253 798Q1251 786 1239 781Z" fill="url(#sideFillet)" />
    <path d="M1253 798 1563 624 1564 700 1254 875Z" fill="#585e68" />
    <path d="M1563 624 1564 622 1566 699 1564 700Z" fill="#444a53" />
    <path d="M1231 800 1253 798 1254 875Q1243 878 1233 876Z" fill="url(#corner)" />
    <path d="M1231 800C1231 788 1235 781 1239 781 1247 782 1253 790 1253 798Q1242 804 1231 800Z" fill="url(#corner)" />
    <circle cx="1236" cy="793" r="5" fill="url(#glow)" />
    <path
      d="M556 648 799 512M560 648 1239 781 1549 608M552 668 1231 800M1253 798 1563 624M544 663Q547 667 552 668M560 648Q552 655 552 668L553 743M1231 800C1231 788 1235 781 1239 781 1247 782 1253 790 1253 798Q1242 804 1231 800L1233 876M1253 798 1254 875M553 743 1232 876Q1243 878 1254 875L1566 699 1564 622M1563 624 1564 698M1549 608Q1560 611 1563 624M946 489 1550 607Q1562 610 1564 622M859 478Q863 474 871 474L887 478M546 739Q547 742 553 743"
      stroke="#16181b"
      strokeWidth="1"
    />
  </g>
);

const Pocket = () => (
  <g>
    <path d="M13 960C15 930 70 914 128 910L445 877C530 868 595 882 615 910L685 1025C690 1050 640 1068 600 1075L250 1108C170 1118 110 1112 85 1078Z" fill="#9ba7b6" />
    <path d="M13 960C15 930 70 914 128 910Q145 950 145 1000 110 1003 92 1018 60 970 15 968Z" fill="#929eac" />
    <path d="M60 945Q120 960 135 1000L92 1018Q75 990 50 975Z" fill="#717a86" opacity=".5" />
    <path d="M15 968Q60 970 92 1018L145 1100Q110 1075 85 1078Z" fill="#8b96a4" />
    <path d="M92 1018Q110 1003 145 1000L148 1100Z" fill="#818b98" />
    <path d="M128 910 445 877Q462 920 460 968L145 1000Q145 950 128 910Z" fill="url(#rim)" />
    <path d="M145 1000 460 968 465 1084 148 1102Z" fill="#848f9a" />
    <path d="M445 877C530 868 595 882 613 912Q550 935 547 985 530 962 460 968 462 920 445 877Z" fill="#9aa6b6" />
    <path d="M460 968Q530 962 547 985L547 1078 465 1084Z" fill="#98a4b4" />
    <path d="M547 985 605 1072 547 1078Z" fill="#7d8793" />
    <path d="M613 912 685 1022Q640 1020 620 1068L605 1072 547 985Q550 935 613 912Z" fill="url(#ramp)" />
    <ellipse cx="497" cy="928" rx="28" ry="24" fill="url(#glow)" />
    <path
      d="M13 960C15 930 70 914 128 910L445 877C530 868 595 882 615 910L685 1025C690 1050 640 1068 600 1075L250 1108C170 1118 110 1112 85 1078ZM92 1018Q110 1003 145 1000L460 968Q530 962 547 985L605 1072M128 910Q145 950 145 1000L148 1102M445 877Q462 920 460 968L465 1084M547 985V1078M613 912Q550 935 547 985M685 1022Q640 1020 620 1068M15 968Q60 970 92 1018M85 1078Q110 1075 145 1098M190 1110Q340 1097 500 1080"
      stroke="#16181b"
      strokeWidth="3"
    />
  </g>
);

const Bracket = () => (
  <g strokeLinejoin="round">
    <path d="M120 535C90 545 75 560 78 580 85 605 130 630 195 627L223 612 212 550 180 568Q130 560 120 535Z" fill="#93a0ae" />
    <path d="M106 125Q115 155 165 162L178 568Q130 560 120 540Z" fill="url(#column)" />
    <path d="M106 125C106 90 140 67 185 67L585 145 603 132C630 140 648 155 650 182L572 217 202 146 165 162Q115 155 106 125Z" fill="#98a4b3" />
    <path d="M135 100C135 80 160 67 185 67L585 145Q600 141 603 132C622 140 625 155 612 162L572 180 197 107Q180 108 163 124 137 118 135 100Z" fill="#8f9aa8" />
    <path d="M197 107 572 180 572 217 202 146Z" fill="url(#topRound)" />
    <path d="M163 124Q180 108 197 107L202 146 165 162Z" fill="#7d8793" />
    <path d="M165 162 202 146 212 550 180 570Z" fill="#5f6670" />
    <path d="M202 146 572 217 583 640 530 613 212 550Z" fill="#99a5b4" />
    <path d="M212 550 530 613 516 665 223 612Z" fill="url(#topRound)" />
    <path d="M180 568 212 550 223 612 195 627Q180 600 180 568Z" fill="#8591a0" />
    <path d="M530 613Q560 620 583 640L585 665 555 690Q535 665 516 665Z" fill="#a9b6c9" />
    <ellipse cx="556" cy="652" rx="26" ry="13" fill="url(#glow)" transform="rotate(35 556 652)" />
    <path d="M662 585C690 590 710 605 706 632 680 655 620 695 555 692L585 665Q640 640 662 600Z" fill="#8a95a3" />
    <path d="M572 217Q640 212 650 182L653 330 662 590Q640 640 585 665Z" fill="url(#corner)" />
    <path d="M572 180 612 162C625 155 622 140 603 132 635 138 650 160 650 182 635 212 600 217 572 217Z" fill="#8f9ba9" />
    <path d="M288 206 358 218Q374 222 373 235L374 285Q374 297 362 295L290 283Q276 280 277 268L275 218Q276 205 288 206Z" fill="#909ba8" />
    <path d="M288 206 358 218 278 262 275 218Q276 205 288 206Z" fill="#5f666f" />
    <path d="M278 262 350 220 373 240 298 283 290 283Q276 280 278 262Z" fill="#848e9a" />
    <path d="M356 221Q370 224 370 240L360 232Z" fill="#e8e9ed" />
    <ellipse cx="348" cy="428" rx="84" ry="103" transform="rotate(-22 348 428)" fill="#a9b6c8" stroke="#16181b" strokeWidth="3" />
    <ellipse cx="357" cy="423" rx="72" ry="90" transform="rotate(-22 357 423)" fill="url(#bore)" stroke="#16181b" strokeWidth="3" />
    <path d="M352 341C400 345 440 400 433 450L428 468C385 460 345 410 352 341Z" fill="#e8e9ed" stroke="#16181b" strokeWidth="2" />
    <path d="M583 265Q580 230 605 218L645 200 660 222 870 262Q893 268 892 288L893 345Q890 364 868 364L655 323 648 340 590 290Z" fill="#919dab" />
    <path d="M655 222 870 262 833 285 625 240Z" fill="#8692a0" />
    <path d="M608 250 830 285 830 312 600 268Z" fill="#aab8cb" />
    <path d="M600 275 835 322 870 364 655 323Z" fill="#616974" />
    <path d="M855 300 888 275 893 345 870 362 835 322Z" fill="#6b737e" />
    <ellipse cx="838" cy="298" rx="12" ry="16" fill="url(#glow)" />
    <ellipse cx="604" cy="248" rx="12" ry="18" fill="url(#glow)" />
    <path
      d="M106 125C106 90 140 67 185 67L585 145Q600 141 603 132M106 125Q115 155 165 162L202 146 572 217Q640 212 650 182M135 100Q137 118 163 124 180 108 197 107L572 180 612 162C625 155 622 140 603 132 635 138 650 160 650 182L648 205M185 67Q140 75 135 100M163 124 165 162 180 570M197 107 202 146 212 550 530 613Q560 620 583 640M572 180 572 217 583 665M120 535C90 545 75 560 78 580 85 605 130 630 195 627L223 612 516 665Q480 680 485 705M180 568Q130 560 120 540M180 568 212 550 223 612M180 568Q180 600 195 627M530 613 526 655 516 665 555 692Q570 670 585 665 640 640 662 590M662 585C690 590 710 605 706 632 680 655 620 695 555 692M583 265Q580 230 605 218L645 200 660 222 870 262Q893 268 892 288L893 345Q890 364 868 364L655 323 648 340Q610 310 590 290ZM625 240 833 285 870 262M655 222 625 240 608 215M600 262 830 308M600 275 835 322 868 364M625 240Q600 245 600 275M892 275 850 305 893 345M833 282Q815 300 835 322 860 310 855 295 850 280 833 282M600 275Q620 300 655 323"
      stroke="#16181b"
      strokeWidth="3"
    />
    <path d="M288 206 358 218Q374 222 373 235L374 285Q374 297 362 295L290 283Q276 280 277 268L275 218Q276 205 288 206ZM278 258 345 217M298 283 373 240" stroke="#16181b" strokeWidth="3" />
  </g>
);

const Bosses = () => (
  <g strokeLinejoin="round">
    {/* pin */}
    <path d="M612 135 787 135 799 530Q785 553 720 553 700 553 686 549L625 430Z" fill="url(#pin)" />
    <path d="M646 155 677 160 686 549 655 420Z" fill="#8c97a4" />
    <path d="M612 138C610 80 650 48 697 48 748 48 789 80 787 138 765 168 710 165 677 160Q672 140 659 140 646 142 645 155 620 152 612 138Z" fill="url(#dome)" />
    <circle cx="690" cy="108" r="24" fill="url(#glow)" />
    <path d="M612 138Q620 152 645 155 646 142 659 140 672 140 677 160 765 168 787 138M646 155 654 415M677 160 686 549Q700 553 720 553 785 553 799 530L798 518" stroke="#16181b" strokeWidth="3" />

    {/* cylinder */}
    <path d="M357 470 681 460 690 760 640 890Q520 905 420 890L366 790Z" fill="url(#cyl)" />
    <path d="M357 462Q360 440 388 420L650 415Q680 430 681 455 675 510 519 514 370 512 357 462Z" fill="url(#chamferRing)" />
    <path d="M430 895Q520 897 600 888L640 960Q520 1000 400 975Z" fill="#929eac" />
    <ellipse cx="492" cy="932" rx="50" ry="18" fill="url(#glow)" />
    <ellipse cx="518" cy="430" rx="133" ry="46" fill="#919ca9" stroke="#16181b" strokeWidth="3" />
    <ellipse cx="518" cy="430" rx="75" ry="26" fill="url(#bore)" stroke="#16181b" strokeWidth="3" />
    <path d="M388 420Q360 440 357 462 370 512 519 514 675 510 681 455 678 432 651 422M430 895Q520 897 600 888M408 974Q520 995 635 970" stroke="#16181b" strokeWidth="3" />

    {/* left boss */}
    <path d="M370 772C410 790 470 850 460 910 455 940 435 970 410 975L250 1010 400 930 430 900 345 812Q365 800 370 772Z" fill="#8f9ba8" />
    <path d="M145 890C148 862 165 845 190 846L345 812C390 845 425 870 430 900 425 920 410 925 395 930L235 962 150 950Z" fill="url(#arm)" />
    <path d="M105 955C110 940 130 935 140 932L188 962 238 962 395 930 410 975 250 1010C200 1012 165 1000 140 985 110 970 105 965 105 955Z" fill="#8e99a7" />
    <path d="M142 935C138 880 150 846 185 845 215 850 236 900 236 960L188 962Z" fill="#919daa" />
    <path d="M142 935C140 905 150 888 158 888 178 895 188 925 188 962Z" fill="#87929f" />
    <ellipse cx="207" cy="905" rx="12" ry="28" fill="url(#glow)" />
    <ellipse cx="404" cy="830" rx="12" ry="30" fill="url(#glow)" transform="rotate(-30 404 830)" />
    <ellipse cx="207" cy="984" rx="12" ry="16" fill="url(#glow)" />
    <path d="M178 846C215 850 236 900 236 960M142 935C140 905 150 888 158 888 178 895 188 925 188 962M342 812C390 845 425 870 430 900 425 920 410 925 395 930L238 962Q210 966 188 962L140 932C130 935 110 940 105 955 105 972 140 985 160 995 200 1012 240 1012 250 1010L410 975C435 970 460 940 460 905 460 850 410 780 370 772L366 790M395 930Q400 960 410 975M230 963V1010M238 962Q240 995 250 1010M188 962Q185 985 160 995M140 932Q140 945 112 962" stroke="#16181b" strokeWidth="3" />

    {/* right boss */}
    <path d="M635 960 760 945 800 965 860 950 905 905C910 930 945 935 945 948 940 965 900 985 875 993 840 1008 800 1005 785 1000L640 972Z" fill="#8f9ba9" />
    <path d="M760 950 795 828 855 838C890 840 905 870 908 920L850 955 800 960Z" fill="#929ead" />
    <path d="M850 955C850 905 868 880 885 880 900 885 908 905 906 922Z" fill="#6b737f" />
    <ellipse cx="824" cy="905" rx="12" ry="34" fill="url(#glow)" />
    <ellipse cx="822" cy="985" rx="12" ry="12" fill="url(#glow)" />
    <path d="M855 838C820 850 800 890 800 956M855 838C890 840 905 870 908 920M850 955C850 905 868 880 885 880 900 885 908 905 906 922L850 955Q820 960 760 946M906 922C915 935 945 935 945 948 940 965 900 985 875 993 840 1008 800 1005 785 1000L640 972Q615 970 605 955M800 956Q800 985 785 1000M850 955Q855 980 875 993M906 922Q915 940 935 938M645 958 625 972" stroke="#16181b" strokeWidth="3" />

    {/* offset surface */}
    <path d="M865 768C905 768 932 830 932 884L903 878C895 850 870 838 850 837L795 828C810 795 835 770 865 768Z" fill="url(#blueInner)" />
    <path d="M720 738C660 750 575 870 578 915 580 940 600 951 610 952L760 980C760 900 790 775 865 768Z" fill="url(#bluePatch)" />
    <path d="M720 738C660 750 575 870 578 915 580 940 600 951 610 952L760 980C760 900 790 775 865 768L720 738C760 750 735 800 752 828 760 845 770 852 780 856L932 884C932 830 905 768 865 768" stroke="#15d315" strokeWidth="3" />
  </g>
);

const Model = () => (
  <svg viewBox="298 162 1622 884" fill="none" className="absolute inset-0 h-full w-full" role="img" aria-label="Model view">
    <Defs />
    <Plate />
    <g transform="translate(1010 370) scale(.33333)">
      <Pocket />
      <g transform="translate(470 -264)">
        <Pocket />
      </g>
      <Bracket />
    </g>
    <g transform="translate(680 350) scale(.33333)">
      <Bosses />
    </g>
    <path d="M660 162v14l4-3 3 6 3-1.500-3-6h5z" fill="#f4f4f4" stroke="#555" strokeWidth="1.300" />
  </svg>
);

/* ---------- status bar ---------- */

const StatusBar = () => (
  <footer className="flex h-[34px] items-center border-t border-[#aab8bd] bg-white pt-px text-[11px] text-[#444]">
    <button aria-label="Toggle navigator" className="ml-[6px] flex h-6 w-[22px] items-center justify-center border border-[#aaa] bg-[#dfe0e2]">
      <Svg>
        <path d="M.5 1.500h15v13H.5z" fill="#f4f4f4" stroke="#999" />
        <path d="M.5 4.500h15" stroke="#999" />
        <path d="M.5 5.500h5v9h-5z" fill="#fff" stroke="#136a92" />
        <ellipse cx="11.500" cy="12.500" rx="4" ry="2.200" fill="#fff" stroke="#333" />
        <circle cx="11.500" cy="12.500" r="1.300" fill="#333" />
      </Svg>
    </button>
    <button aria-label="Toggle browser" className="ml-[7px]">
      <Svg>
        <circle cx="8" cy="8" r="7" fill="#3b9ad0" />
        <path d="M4 5c2-2 4-1 4 1s-3 2-3 4M9 9c2-1 4 0 4 1l-2 3" stroke="#bfe6f8" strokeWidth="1.600" />
        <path d="M1 14C-1 10 8 1 14 1c4 1-3 12-12 13" stroke="#666" />
      </Svg>
    </button>
    <button aria-label="Full screen" className="ml-[10px]">
      <Svg>
        <path d="M.5.500h15v15H.5z" fill="#e3f3fa" stroke="#136a92" />
      </Svg>
    </button>
    <div className="ml-3">
      <Sep />
    </div>
    <div className="ml-auto flex items-center">
      <Sep />
      <div className="mr-[6px] ml-1">
        <Sep />
      </div>
      <button aria-label="Find" className="flex items-center gap-[6px]">
        {icons.search}
        <Caret />
      </button>
      <div className="mx-[6px]">
        <Sep />
      </div>
      <button aria-label="Selection box" className="flex items-center gap-[7px]">
        <Svg>
          <path d="M.5 2.500h15v10.500H.5z" stroke="#444" strokeDasharray="3 2" />
        </Svg>
        <Caret />
      </button>
      <button className="ml-[9px] flex items-center gap-2">
        <Svg>
          <path d="M.5.500h15v15H.5z" fill="#c9eefa" stroke="#136a92" strokeDasharray="3 1.500" />
          <path d="M1 4c3-3 6-3 9 0-3 3-6 3-9 0z" fill="#fff" stroke="#444" />
          <circle cx="5.500" cy="4" r="1.500" fill="#444" />
          <path d="M9 5v9l2-2 2 3 1.500-1L13 11h3z" fill="#fff" stroke="#555" />
        </Svg>
        1 selected
      </button>
      <div className="relative mr-[18px] ml-[34px]">
        <select aria-label="Selection filter" className="block h-[23px] w-[165px] appearance-none border border-[#a8a8a8] bg-[#f7f7f7] pl-[7px] outline-0">
          <option>Regions and Surfaces</option>
          <option>Geometry</option>
        </select>
        <span className="pointer-events-none absolute top-0 right-0 flex h-[23px] w-4 items-center justify-center border-l border-[#b0b0b0]">
          <Caret />
        </span>
      </div>
    </div>
  </footer>
);

const App = () => (
  <div className="flex min-h-screen flex-col bg-white font-['Noto_Sans',sans-serif]">
    <TitleBar />
    <MenuBar />
    <Ribbon />
    <div className="flex flex-1">
      <Sidebar />
      <main className="relative flex flex-1 items-start justify-center bg-[#e8e9ed]">
        <Model />
        <ViewToolbar />
      </main>
    </div>
    <StatusBar />
  </div>
);

export default App;
